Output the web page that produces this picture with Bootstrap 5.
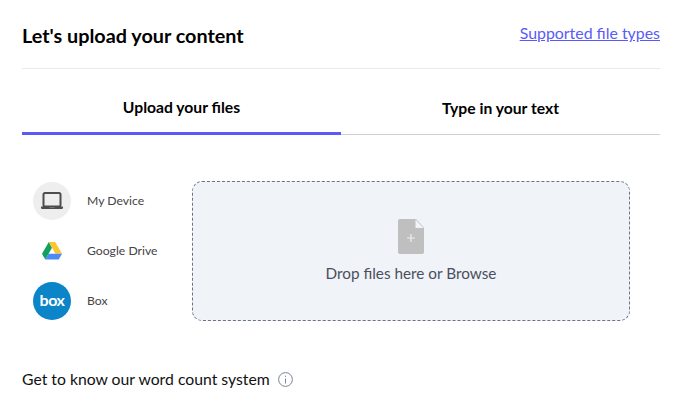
<!DOCTYPE html>
<html lang="en">
<head>
<meta charset="utf-8">
<title>Upload</title>
<link href="https://cdn.jsdelivr.net/npm/bootstrap@5.3.0/dist/css/bootstrap.min.css" rel="stylesheet">
<style>
html, body { height: 100%; }
body { font-family: "Lato", "Liberation Sans", sans-serif; background: #fff; color: #000; overflow: hidden; }
.shell { padding: 0 21px 0 22px; }
.top-bar { height: 69px; border-bottom: 1px solid #e9e9f4; padding-top: 21px; }
.top-title { font-size: 19.8px; font-weight: 700; line-height: 28px; margin: 0; }
.types-link { font-size: 15.9px; line-height: 24px; color: #5a5bf6; }
.tab-strip { height: 66px; border-bottom: 1px solid #d0d0d8; }
.tab-item { font-size: 15.7px; font-weight: 700; color: #000; line-height: 24px; padding-top: 27px; }
.tab-item.on { border-bottom: 3px solid #5a5bf6; margin-bottom: -1px; padding-top: 26px; }
.work-area { padding: 46px 30px 0 11px; }
.source-list { width: 159px; gap: 12px; padding-top: 1px; }
.source-row { height: 38px; gap: 16px; font-size: 12.2px; color: #444; white-space: nowrap; }
.source-icon { width: 38px; height: 38px; flex: none; }
.device-icon { background: #eeeeee; }
.box-icon { background: #0b84c8; color: #fff; font-size: 16px; font-weight: 700; letter-spacing: -.5px; line-height: 1; padding-bottom: 2px; }
.drop-zone { flex: 1; height: 140px; background: #f0f3f8; border: 1px dashed #6c7388; border-radius: 10px; color: #4a4f5c; font-size: 15.3px; gap: 8px; padding-top: 1px; }
.foot-note { margin-top: 48px; font-size: 15.75px; line-height: 20px; gap: 8px; color: #111; }
</style>
</head>
<body>
<div class="shell">
  <div class="top-bar d-flex justify-content-between align-items-start">
    <h1 class="top-title">Let's upload your content</h1>
    <a class="types-link" href="#">Supported file types</a>
  </div>
  <div class="tab-strip row g-0">
    <div class="tab-item on col-6 text-center">Upload your files</div>
    <div class="tab-item col-6 text-center">Type in your text</div>
  </div>
  <div class="work-area d-flex">
    <div class="source-list d-flex flex-column">
      <div class="source-row d-flex align-items-center">
        <span class="source-icon device-icon rounded-circle d-flex align-items-center justify-content-center">
          <svg width="22" height="18" viewBox="0 0 22 18"><rect x="2.500" y="1" width="17" height="13.500" rx="1.500" fill="none" stroke="#4d4d4d" stroke-width="2"/><path d="M0 14.500h8.500v1h5v-1H22v1.200a1.300 1.300 0 0 1-1.300 1.300H1.300A1.300 1.300 0 0 1 0 15.700z" fill="#4d4d4d"/></svg>
        </span>
        <span>My Device</span>
      </div>
      <div class="source-row d-flex align-items-center">
        <span class="source-icon d-flex align-items-center justify-content-center">
          <svg width="20" height="18" viewBox="0 0 20 18"><path d="M6.800 0 0 11.800 3.300 17.500 10 5.800z" fill="#12a05c"/><path d="M6.800 0h6.400L20 11.800h-6.600z" fill="#fbc52f"/><path d="M6.500 11.800H20l-3.300 5.700H3.300z" fill="#4c8bf5"/></svg>
        </span>
        <span>Google Drive</span>
      </div>
      <div class="source-row d-flex align-items-center">
        <span class="source-icon box-icon rounded-circle d-flex align-items-center justify-content-center">box</span>
        <span>Box</span>
      </div>
    </div>
    <div class="drop-zone d-flex flex-column align-items-center justify-content-center">
      <svg width="26" height="35" viewBox="0 0 26 35"><path d="M2 0h16l8 8.500V33a2 2 0 0 1-2 2H2a2 2 0 0 1-2-2V2a2 2 0 0 1 2-2z" fill="#bfbfbf"/><path d="M17.500 0.500v8.500H25.500z" fill="#f0f3f8"/><path d="M13 15v8M9 19h8" stroke="#eee" stroke-width="1.200"/></svg>
      <span>Drop files here or Browse</span>
    </div>
  </div>
  <div class="foot-note d-flex align-items-center">
    <span>Get to know our word count system</span>
    <svg width="15" height="15" viewBox="0 0 15 15"><circle cx="7.500" cy="7.500" r="6.900" fill="none" stroke="#7d8392" stroke-width="1"/><path d="M7.500 6.500v5M7.500 3.700v1.200" stroke="#7d8392" stroke-width="1"/></svg>
  </div>
</div>
<script src="https://cdn.jsdelivr.net/npm/bootstrap@5.3.0/dist/js/bootstrap.bundle.min.js"></script>
</body>
</html>
